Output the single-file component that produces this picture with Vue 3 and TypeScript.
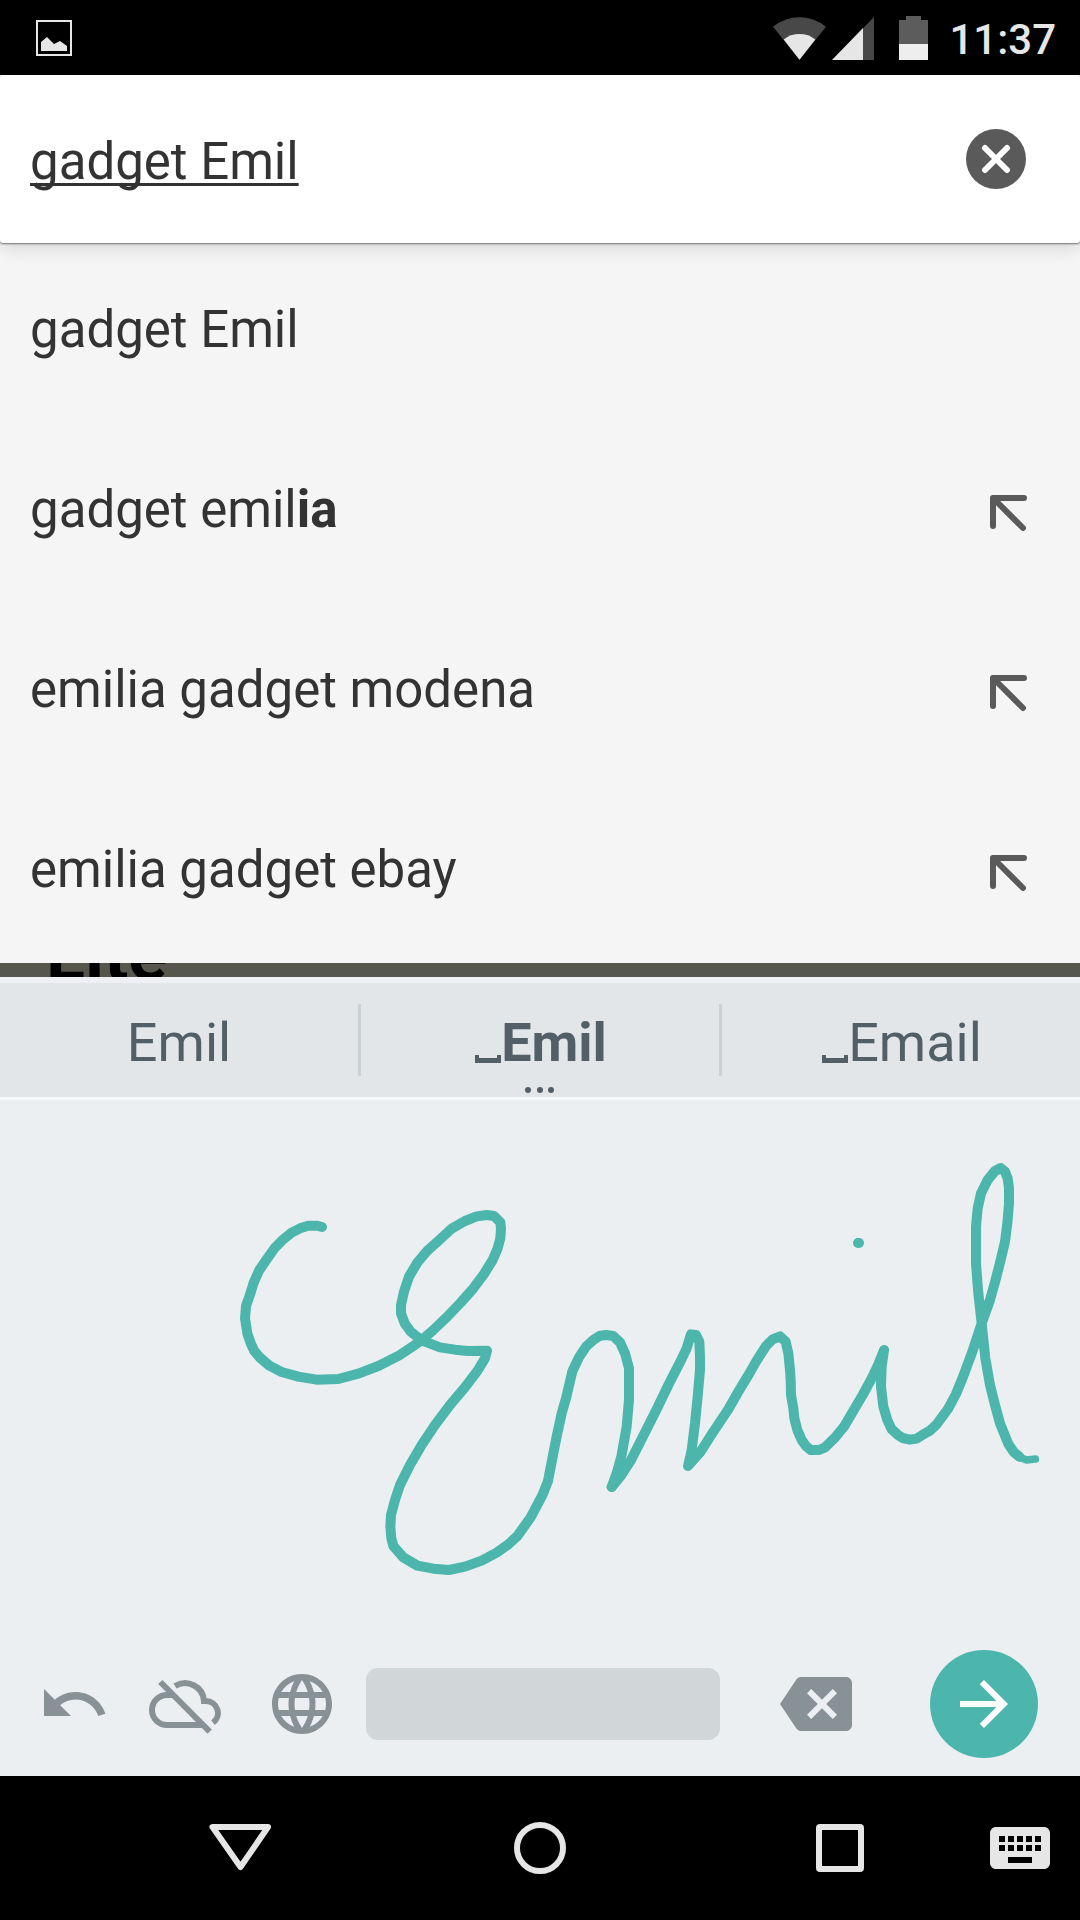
<script setup lang="ts">
import { ref } from 'vue'

interface Suggestion {
  text: string
  completion?: string
  refinable: boolean
}

const query = ref('gadget Emil')

const suggestions: Suggestion[] = [
  { text: 'gadget Emil', refinable: false },
  { text: 'gadget emil', completion: 'ia', refinable: true },
  { text: 'emilia gadget modena', refinable: true },
  { text: 'emilia gadget ebay', refinable: true },
]

const candidates = [
  { word: 'Emil', spaced: false, best: false },
  { word: 'Emil', spaced: true, best: true },
  { word: 'Email', spaced: true, best: false },
]

const strokeStart =
  '306,141 290,137 265,137 240,145 215,158 190,178 165,203 140,238 117,272 101,308 88,350 78,378 75,415 82,460 93,492 103,513 120,533 148,557 185,576 235,590 290,599 355,597 415,581 475,558 538,526 605,481 640,450 682,410 722,368 760,325 792,282 818,240 833,205 841,175 843,145 841,127 822,108 800,105 770,109 735,123 695,146 660,178 622,212 592,248 567,290 552,335 543,375 543,400 554,430 572,455 605,481 660,502 705,509 745,513 801,512 795,535 772,573 735,622 690,675 645,735 605,795 570,855 540,915 525,960 513,1005 511,1040 514,1075 520,1098 550,1132 592,1157 640,1166 687,1170 735,1160 785,1142 830,1118 865,1093 892,1068 932,1012 968,944 984,903 1000,820 1011,765 1025,700 1038,655 1057,574 1078,530 1098,500 1120,480 1140,467 1158,465 1180,468 1200,487 1215,520 1227,565 1227,660 1220,740 1204,830 1190,880 1175,921'
const strokeEnd =
  '95,1041 122,1008 152,962 190,887 230,808 265,735 300,667 320,625 333,583 348,585 358,605 360,650 360,690 353,770 345,850 335,930 324,978 362,935 400,875 445,808 475,755 510,697 528,665 558,618 578,598 600,589 617,605 625,640 630,690 632,720 633,765 640,805 643,835 652,870 665,900 677,917 692,930 717,930 735,922 765,893 792,860 820,812 848,765 875,715 895,673 912,630 905,680 903,740 910,800 922,840 935,868 955,886 968,894 990,899 1010,896 1030,883 1050,872 1070,853 1105,805 1128,762 1150,708 1178,632 1205,550 1230,480 1248,415 1262,360 1275,305 1282,250 1287,190 1287,145 1283,115 1275,95 1262,84 1245,93 1223,120 1203,160 1193,205 1188,260 1188,370 1194,450 1205,550 1216,655 1230,735 1245,795 1260,850 1285,912 1302,937 1318,950'
</script>

<template>
  <div class="phone">
    <header class="status">
      <svg class="photo" viewBox="0 0 36 36" aria-hidden="true">
        <rect x="1" y="1" width="34" height="34" fill="none" stroke="#e6e6e6" stroke-width="2" />
        <path d="M5 31V22L11 17L18 24L24 21L31 26V31Z" fill="#e6e6e6" />
      </svg>
      <svg class="wifi" viewBox="0 0 54 44" aria-hidden="true">
        <path d="M26.5 43.7L0 10.7A42.3 42.3 0 0 1 53 10.7Z" fill="#484848" />
        <path d="M26.5 43.7L10.7 23.5A25.7 25.7 0 0 1 42.3 23.5Z" fill="#e6e6e6" />
      </svg>
      <svg class="signal" viewBox="0 0 43 44" aria-hidden="true">
        <path d="M0 44L42 1V44Z" fill="#484848" />
        <path d="M0 44L31 12V44Z" fill="#e6e6e6" />
      </svg>
      <svg class="battery" viewBox="0 0 29 44" aria-hidden="true">
        <path d="M7 0H22V4H29V44H0V4H7Z" fill="#5c5c5c" />
        <path d="M0 28H29V44H0Z" fill="#eee" />
      </svg>
      <time class="clock">11:37</time>
    </header>

    <form class="search" @submit.prevent>
      <input v-model="query" class="query" type="text" aria-label="Search" spellcheck="false" />
      <button class="clear" type="button" aria-label="Clear search" @click="query = ''">
        <svg viewBox="0 0 60 60" aria-hidden="true">
          <circle cx="30" cy="30" r="30" fill="#5a5a5a" />
          <path d="M19 19L41 41M41 19L19 41" stroke="#fff" stroke-width="6" stroke-linecap="round" />
        </svg>
      </button>
    </form>

    <ul class="suggestions">
      <li v-for="s in suggestions" :key="s.text + (s.completion ?? '')" class="row">
        <button class="choice" type="button">{{ s.text }}<b v-if="s.completion">{{ s.completion }}</b></button>
        <button v-if="s.refinable" class="refine" type="button" aria-label="Use suggestion">
          <svg viewBox="0 0 37 37" aria-hidden="true">
            <path d="M3 31V3H34M3 3L33 33" fill="none" stroke="#5a5a5a" stroke-width="6" stroke-linecap="round" stroke-linejoin="round" />
          </svg>
        </button>
      </li>
    </ul>

    <div class="page-behind"><strong>Lite</strong></div>

    <section class="keyboard" aria-label="Handwriting keyboard">
      <div class="candidates">
        <button v-for="(c, i) in candidates" :key="i" class="candidate" :class="{ best: c.best }" type="button">
          <span><i v-if="c.spaced" class="space-mark"></i>{{ c.word }}</span>
          <svg v-if="c.best" class="more" viewBox="0 0 30 6" aria-hidden="true">
            <circle cx="3" cy="3" r="3" />
            <circle cx="15" cy="3" r="3" />
            <circle cx="26" cy="3" r="3" />
          </svg>
        </button>
      </div>

      <svg class="ink" viewBox="0 0 3240 1596" role="img" aria-label="Handwritten word">
        <g fill="none" stroke="#4db6ac" stroke-width="30" stroke-linecap="round" stroke-linejoin="round">
          <polyline transform="translate(660 240)" :points="strokeStart" />
          <g transform="translate(1740 120)">
            <polyline :points="strokeEnd" />
            <path d="M1316 951L1340 960L1366 957" stroke-width="23" />
            <path d="M834 309H837" />
          </g>
        </g>
      </svg>

      <div class="tools">
        <button class="tool undo" type="button" aria-label="Undo">
          <svg viewBox="0 0 24 24" aria-hidden="true">
            <path d="M12.5 8c-2.65 0-5.05.99-6.9 2.6L2 7v9h9l-3.62-3.62c1.39-1.16 3.16-1.88 5.12-1.88 3.54 0 6.55 2.31 7.6 5.5l2.37-.78C21.08 11.03 17.15 8 12.5 8z" />
          </svg>
        </button>
        <button class="tool offline" type="button" aria-label="Cloud recognition off">
          <svg viewBox="0 0 216 216" aria-hidden="true">
            <g fill="none" stroke="#889195" stroke-width="18">
              <path d="M72 81H54A45 45 0 0 0 54 171H164" />
              <path d="M78 54A57 57 0 0 1 165 99H171A36 36 0 0 1 192 164" />
              <path d="M34 42L182 191" />
            </g>
          </svg>
        </button>
        <button class="tool globe" type="button" aria-label="Change language">
          <svg viewBox="0 0 24 24" aria-hidden="true">
            <path d="M11.99 2C6.47 2 2 6.48 2 12s4.47 10 9.99 10C17.52 22 22 17.52 22 12S17.52 2 11.99 2zm6.93 6h-2.95c-.32-1.25-.78-2.45-1.38-3.56 1.84.63 3.37 1.91 4.33 3.56zM12 4.04c.83 1.2 1.48 2.53 1.91 3.96h-3.82c.43-1.43 1.08-2.76 1.91-3.96zM4.26 14C4.1 13.36 4 12.69 4 12s.1-1.36.26-2h3.38c-.08.66-.14 1.32-.14 2s.06 1.34.14 2H4.26zm.82 2h2.95c.32 1.25.78 2.45 1.38 3.56-1.84-.63-3.37-1.9-4.33-3.56zm2.95-8H5.08c.96-1.66 2.49-2.93 4.33-3.56C8.81 5.55 8.35 6.75 8.03 8zM12 19.96c-.83-1.2-1.48-2.53-1.91-3.96h3.82c-.43 1.43-1.08 2.76-1.91 3.96zM14.34 14H9.66c-.09-.66-.16-1.32-.16-2s.07-1.35.16-2h4.68c.09.65.16 1.32.16 2s-.07 1.34-.16 2zm.25 5.56c.6-1.11 1.06-2.31 1.38-3.56h2.95c-.96 1.65-2.49 2.93-4.33 3.56zM16.36 14c.08-.66.14-1.32.14-2s-.06-1.34-.14-2h3.38c.16.64.26 1.31.26 2s-.1 1.36-.26 2h-3.38z" />
          </svg>
        </button>
        <button class="space" type="button" aria-label="Space"></button>
        <button class="tool backspace" type="button" aria-label="Backspace">
          <svg viewBox="0 0 24 24" aria-hidden="true">
            <path d="M22 3H7c-.69 0-1.23.35-1.59.88L0 12l5.41 8.11c.36.53.9.89 1.59.89h15c1.1 0 2-.9 2-2V5c0-1.1-.9-2-2-2zm-3 12.59L17.59 17 14 13.41 10.41 17 9 15.59 12.59 12 9 8.41 10.41 7 14 10.59 17.59 7 19 8.41 15.41 12 19 15.59z" />
          </svg>
        </button>
        <button class="go" type="button" aria-label="Go">
          <svg viewBox="0 0 24 24" aria-hidden="true">
            <path d="M12 4l-1.41 1.41L16.17 11H4v2h12.17l-5.58 5.59L12 20l8-8z" fill="#fff" />
          </svg>
        </button>
      </div>
    </section>

    <nav class="system" aria-label="System">
      <button type="button" aria-label="Back">
        <svg viewBox="0 0 72 72" aria-hidden="true">
          <path d="M8.5 15H64L36.5 55Z" fill="none" stroke="#e6e6e6" stroke-width="6" stroke-linejoin="round" />
        </svg>
      </button>
      <button type="button" aria-label="Home">
        <svg viewBox="0 0 72 72" aria-hidden="true">
          <circle cx="36" cy="36" r="23" fill="none" stroke="#e6e6e6" stroke-width="6" />
        </svg>
      </button>
      <button type="button" aria-label="Recent apps">
        <svg viewBox="0 0 72 72" aria-hidden="true">
          <path d="M16 12H56A4 4 0 0 1 60 16V56A4 4 0 0 1 56 60H16A4 4 0 0 1 12 56V16A4 4 0 0 1 16 12ZM18 18V54H54V18Z" fill="#e6e6e6" fill-rule="evenodd" />
        </svg>
      </button>
      <button type="button" aria-label="Choose keyboard">
        <svg viewBox="0 0 24 24" aria-hidden="true">
          <path fill="#e6e6e6" d="M20 5H4c-1.1 0-1.99.9-1.99 2L2 17c0 1.1.9 2 2 2h16c1.1 0 2-.9 2-2V7c0-1.1-.9-2-2-2zm-9 3h2v2h-2V8zm0 3h2v2h-2v-2zM8 8h2v2H8V8zm0 3h2v2H8v-2zm-1 2H5v-2h2v2zm0-3H5V8h2v2zm9 7H8v-2h8v2zm0-4h-2v-2h2v2zm0-3h-2V8h2v2zm3 3h-2v-2h2v2zm0-3h-2V8h2v2z" />
        </svg>
      </button>
    </nav>
  </div>
</template>

<style>
body {
  margin: 0;
  background: #000;
}
</style>

<style scoped>
.phone {
  font-family: Roboto, 'Noto Sans', sans-serif;
  color: #333;
  background: #f5f5f5;
}

button {
  display: flex;
  align-items: center;
  justify-content: center;
  margin: 0;
  padding: 0;
  border: 0;
  background: none;
  font: inherit;
  color: inherit;
}

svg {
  display: block;
  flex: none;
}

.status {
  display: flex;
  align-items: center;
  height: 75px;
  box-sizing: border-box;
  padding: 0 24px 0 36px;
  background: #000;
}

.photo {
  width: 36px;
  height: 36px;
  margin-right: auto;
}

.wifi {
  width: 54px;
  height: 44px;
}

.signal {
  width: 43px;
  height: 44px;
  margin-left: 5px;
}

.battery {
  width: 29px;
  height: 44px;
  margin-left: 24px;
}

.clock {
  margin-left: 21px;
  padding-top: 4px;
  font-size: 42px;
  line-height: 48px;
  font-weight: 500;
  color: #e6e6e6;
}

.search {
  position: relative;
  display: flex;
  align-items: center;
  height: 168px;
  padding: 0 54px 0 30px;
  border-radius: 3px;
  background: #fff;
  box-shadow: 0 1px 2px rgba(0, 0, 0, 0.5), 0 4px 20px rgba(0, 0, 0, 0.14);
}

.query {
  flex: 1;
  min-width: 0;
  margin: 0;
  padding: 6px 0 0;
  border: 0;
  outline: 0;
  background: none;
  font: inherit;
  font-size: 51px;
  line-height: 64px;
  color: #333;
  text-decoration: underline;
  text-decoration-thickness: 3px;
  text-underline-offset: 4px;
  text-decoration-skip-ink: none;
}

.clear svg {
  width: 60px;
  height: 60px;
}

.suggestions {
  margin: 0;
  padding: 0;
  list-style: none;
}

.row {
  display: flex;
  align-items: center;
  height: 180px;
  padding: 0 53px 0 30px;
}

.choice {
  flex: 1;
  justify-content: flex-start;
  padding-bottom: 6px;
  font-size: 51px;
  line-height: 64px;
}

.refine svg {
  width: 37px;
  height: 37px;
}

.page-behind {
  display: flex;
  align-items: flex-end;
  height: 14px;
  padding-left: 46px;
  overflow: hidden;
  background: #56564c;
  color: #000;
  font-size: 72px;
  line-height: 42px;
}

.keyboard {
  background: #ebeff2;
}

.candidates {
  display: grid;
  grid-template-columns: repeat(3, 1fr);
  gap: 3px;
  height: 114px;
  border-top: 6px solid #eff0f3;
  border-bottom: 3px solid #f4f8fa;
  background: #e2e6e9;
}

.candidate {
  position: relative;
  padding-top: 6px;
  font-size: 54px;
  line-height: 64px;
  color: #525f67;
}

.candidate + .candidate::before {
  content: '';
  position: absolute;
  left: -3px;
  top: 21px;
  width: 3px;
  height: 72px;
  background: #cbd0d3;
}

.best {
  font-weight: 700;
}

.space-mark {
  display: inline-block;
  box-sizing: border-box;
  width: 26px;
  height: 8px;
  margin-left: 2px;
  border: solid #525f67;
  border-width: 0 4px 5px;
  vertical-align: -2px;
}

.more {
  position: absolute;
  left: 50%;
  bottom: 4px;
  width: 30px;
  height: 6px;
  margin-left: -15px;
  fill: #525f67;
}

.ink {
  width: 100%;
  height: auto;
}

.tools {
  display: flex;
  align-items: center;
  height: 144px;
  padding: 0 42px 0 38px;
}

.tool svg,
.go svg,
.system svg {
  width: 72px;
  height: 72px;
}

.tool {
  fill: #889195;
}

.offline {
  margin-left: 39px;
}

.globe {
  margin-left: 45px;
}

.space {
  flex: 1;
  height: 72px;
  margin: 0 60px 0 28px;
  border-radius: 12px;
  background: #d1d6d9;
}

.go {
  width: 108px;
  height: 108px;
  margin-left: 78px;
  border-radius: 50%;
  background: #4db6ac;
}

.system {
  display: grid;
  grid-template-columns: repeat(3, 1fr) 60px;
  height: 144px;
  padding: 0 30px 0 90px;
  background: #000;
}
</style>
